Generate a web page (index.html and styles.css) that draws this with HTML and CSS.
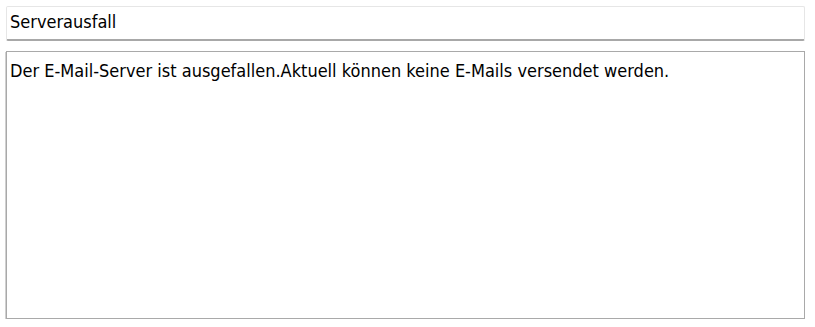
FILE: index.html
```html
<!DOCTYPE html>
<html lang="de">
<head>
<meta charset="utf-8">
<link rel="stylesheet" href="styles.css">
</head>
<body>
<div class="form">
  <div class="subject">Serverausfall</div>
  <div class="message">Der E-Mail-Server ist ausgefallen.Aktuell können keine E-Mails versendet werden.</div>
</div>
</body>
</html>
```
FILE: styles.css
```css
html, body {
  margin: 0;
  padding: 0;
  background: #ffffff;
}
.form {
  display: flex;
  flex-direction: column;
  gap: 10px;
  padding: 6px 10px 0 6px;
  width: 799px;
  font-family: "DejaVu Sans Condensed", "DejaVu Sans", Verdana, sans-serif;
  font-size: 18px;
  line-height: 20px;
  color: #000;
}
.subject {
  height: 35px;
  box-sizing: border-box;
  border: 1px solid #e6e6e6;
  border-bottom: 2px solid #a8a8a8;
  border-radius: 2px;
  padding: 5px 3px 0;
}
.message {
  height: 268px;
  box-sizing: border-box;
  border: 1px solid #a9a9a9;
  box-shadow: -1px 1px 0 #d0d0d0;
  padding: 9px 3px;
}
```
